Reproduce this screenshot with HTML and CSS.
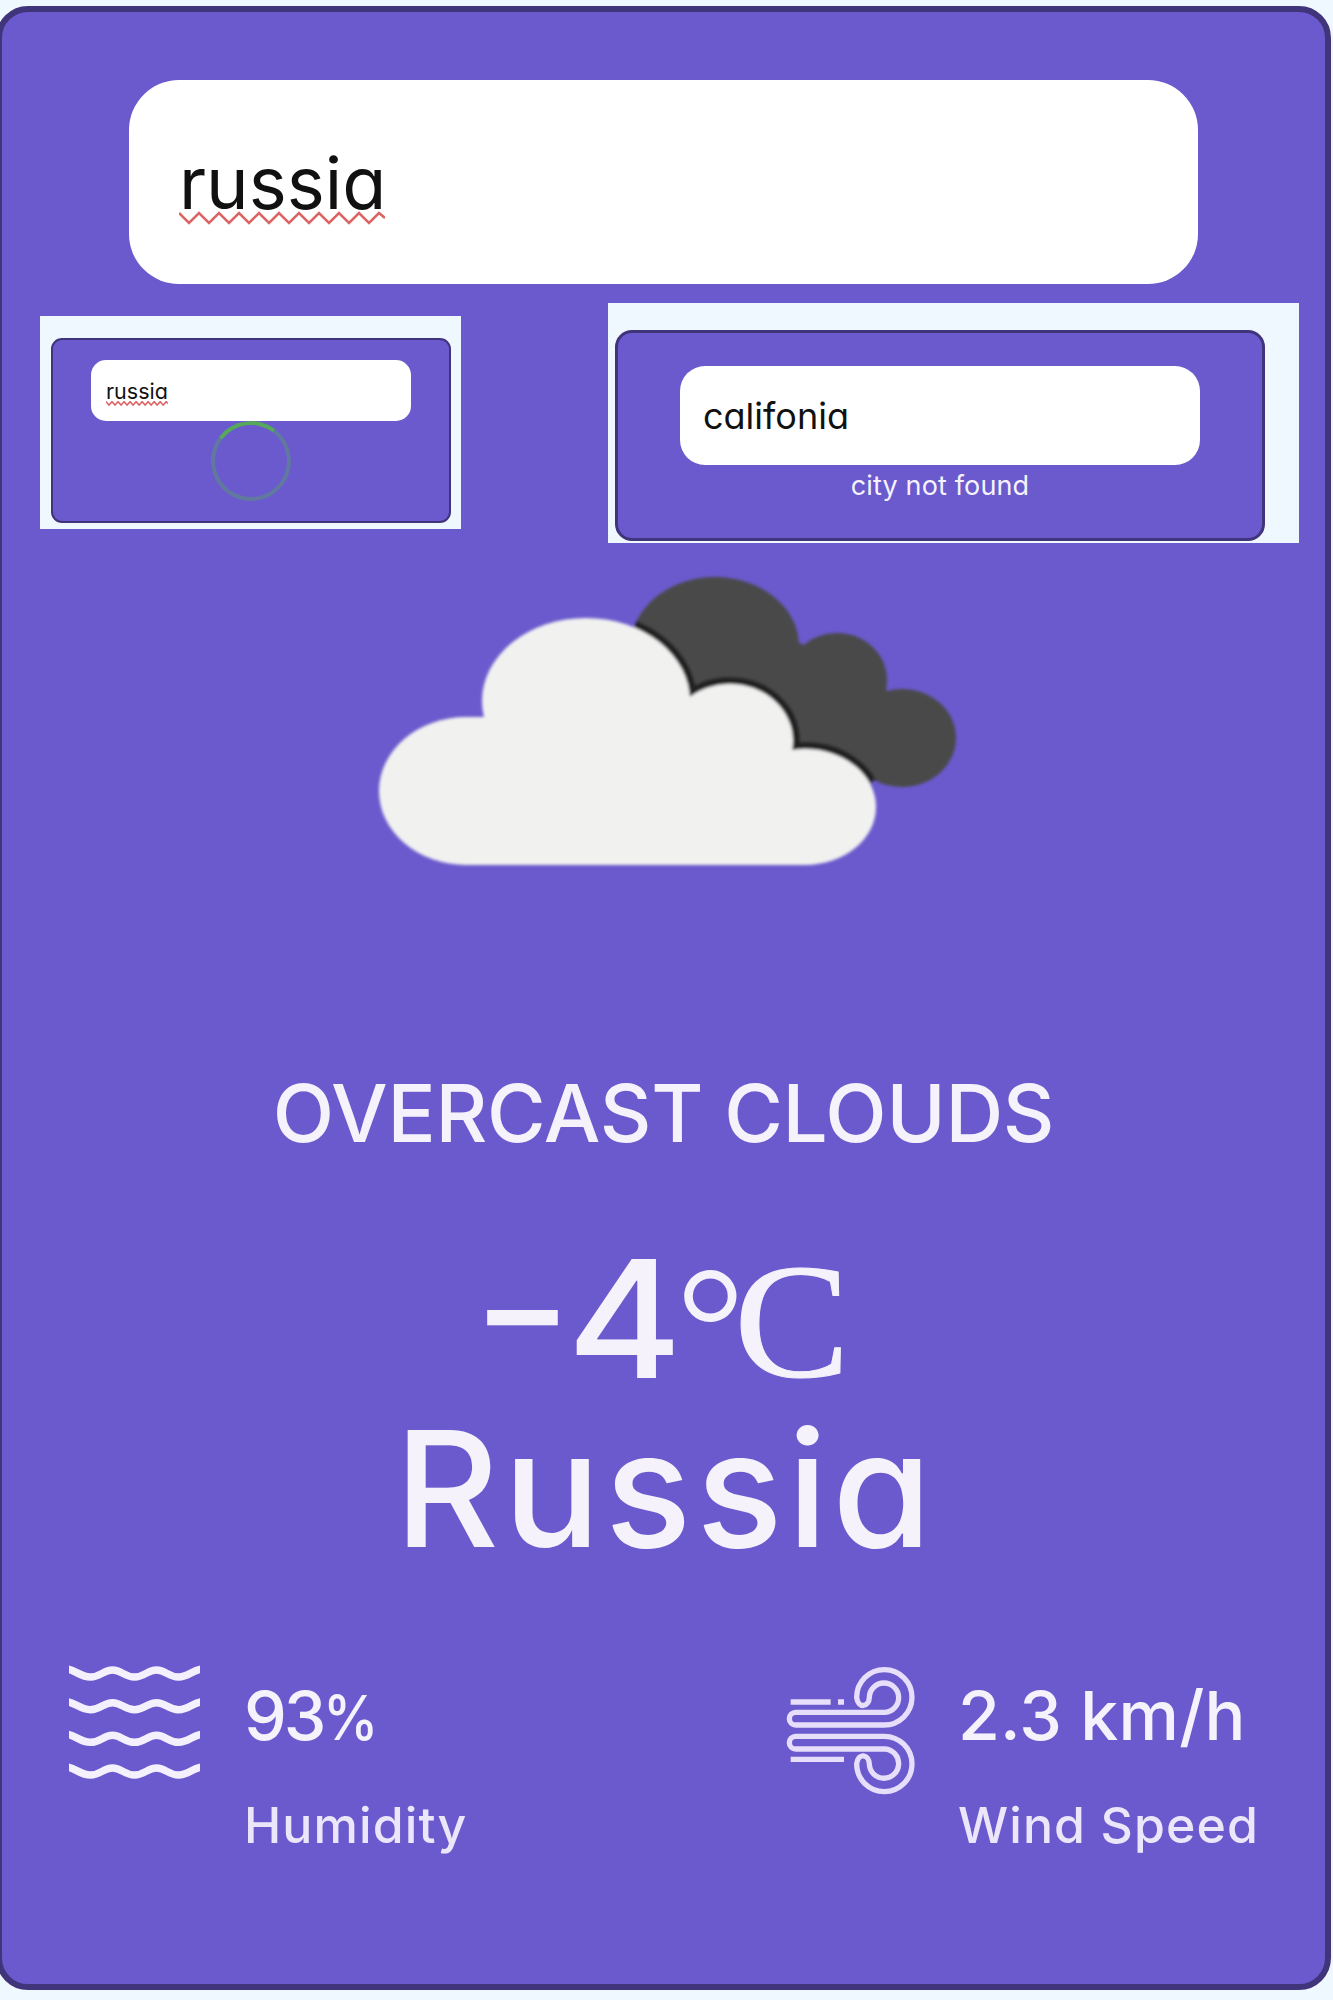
FILE: index.html
```html
<!DOCTYPE html>
<html lang="en">
<head>
<meta charset="utf-8">
<title>Weather</title>
<link rel="stylesheet" href="styles.css">
</head>
<body>
<main class="card">
  <div class="search"><span class="query">russia<svg class="squiggle" viewBox="0 0 206 16" preserveAspectRatio="none"><path d="M0 3L10 13L20 3L30 13L40 3L50 13L60 3L70 13L80 3L90 13L100 3L110 13L120 3L130 13L140 3L150 13L160 3L170 13L180 3L190 13L200 3L206 8"/></svg></span></div>

  <div class="states">
    <section class="state state-loading">
      <div class="mini mini-loading">
        <div class="search search-loading"><span class="query">russia<svg class="squiggle" viewBox="0 0 206 16" preserveAspectRatio="none"><path d="M0 2L10 13L20 2L30 13L40 2L50 13L60 2L70 13L80 2L90 13L100 2L110 13L120 2L130 13L140 2L150 13L160 2L170 13L180 2L190 13L200 2L206 8"/></svg></span></div>
        <div class="spinner"></div>
      </div>
    </section>
    <section class="state state-error">
      <div class="mini mini-error">
        <div class="search search-error"><span class="query">califonia</span></div>
        <p class="error"><span>city not found</span></p>
      </div>
    </section>
  </div>

  <svg class="cloud" viewBox="370 566 600 310">
    <defs>
      <clipPath id="back">
        <ellipse cx="715" cy="646" rx="84" ry="69"/>
        <ellipse cx="837" cy="680" rx="50" ry="47"/>
        <ellipse cx="902" cy="738" rx="54" ry="49"/>
        <path d="M640 640L800 643L887 690L872 784L790 760L690 700Z"/>
      </clipPath>
      <g id="front">
        <ellipse cx="466" cy="791" rx="87" ry="74"/>
        <ellipse cx="586" cy="701" rx="104" ry="83"/>
        <ellipse cx="730" cy="741" rx="63" ry="57"/>
        <ellipse cx="805" cy="807" rx="71" ry="58"/>
        <path d="M466 717H486L690 696L790 750L805 865H466Z"/>
      </g>
      <filter id="soft" x="-5%" y="-5%" width="110%" height="110%"><feGaussianBlur stdDeviation="1.8"/></filter>
    </defs>
    <g filter="url(#soft)">
      <g clip-path="url(#back)">
        <rect x="600" y="560" width="370" height="240" fill="#484849"/>
        <use href="#front" fill="#202023" stroke="#202023" stroke-width="14"/>
      </g>
      <use href="#front" fill="#f1f1f0"/>
    </g>
  </svg>

  <p class="condition"><span>OVERCAST CLOUDS</span></p>
  <p class="temp"><span class="dash">-</span><span class="number">4</span><span class="degree">°</span><span class="unit">C</span></p>
  <p class="city"><span>Russia</span></p>

  <div class="metrics">
    <div class="metric">
      <svg class="waves" viewBox="69 1663 131 118">
        <path id="wave" d="M67 1670C76 1671 80 1678 90.500 1678S103 1671 112.500 1671S124 1678 134.500 1678S147 1671 156.500 1671S168 1678 178.500 1678S192 1671 202 1670"/>
        <use href="#wave" y="32.700"/>
        <use href="#wave" y="65.300"/>
        <use href="#wave" y="98"/>
      </svg>
      <div class="reading">
        <p class="value humidity-value">93<span class="percent">%</span></p>
        <p class="label humidity-label">Humidity</p>
      </div>
    </div>
    <div class="metric">
      <svg class="wind" viewBox="75 70 396 400">
        <path id="gust" d="M290 170A83 83 0 1 1 372 253H107A19 19 0 0 1 107 215H375A44 44 0 1 0 328 170C327 200 294 205 290 170Z"/>
        <use href="#gust" transform="matrix(1 0 0 -1 0 540)"/>
        <path d="M92 184H212M234 184H252M92 356H252"/>
      </svg>
      <div class="reading reading-wind">
        <p class="value wind-value">2.3 km/h</p>
        <p class="label wind-label">Wind Speed</p>
      </div>
    </div>
  </div>
</main>
</body>
</html>
```
FILE: styles.css
```css
* { box-sizing: border-box; }
body {
  margin: 0;
  height: 2000px;
  overflow: hidden;
  background: #f0f8ff;
  color: #f5f2fc;
  font-family: "Inter", "Open Sans", sans-serif;
  font-feature-settings: "cv11" 1;
  display: flow-root;
}
p { margin: 0; white-space: nowrap; }
svg { display: block; flex: none; }

.card {
  width: 1335px;
  height: 1984px;
  margin: 6px 0 0 -4px;
  border: 6px solid #40347a;
  border-radius: 32px;
  background: #6a5acd;
}

.search {
  display: flex;
  align-items: center;
  width: 1069px;
  height: 204px;
  margin: 68px 0 0 127px;
  padding: 2px 0 0 50px;
  border-radius: 50px;
  background: #fff;
  color: #111;
  font-size: 72px;
  line-height: 1.2;
}
.query { position: relative; white-space: nowrap; }
.squiggle {
  position: absolute;
  left: 0;
  top: 70px;
  width: 206px;
  height: 16px;
  fill: none;
  stroke: #dc6464;
  stroke-width: 2.5;
}

.states {
  display: flex;
  align-items: flex-start;
  height: 240px;
  margin: 19px 0 0 38px;
}
.state { background: #f0f8ff; }
.state-loading { width: 421px; height: 213px; margin-top: 13px; padding: 22px 10px 0 11px; }
.state-error { width: 691px; height: 240px; margin-left: 147px; padding: 27px 34px 0 7px; }
.mini { background: #6a5acd; }
.mini-loading { height: 185px; border: 2px solid #40347a; border-radius: 11px; }
.mini-error { height: 211px; border: 3px solid #40347a; border-radius: 17px; }

.search-loading {
  width: 320px;
  height: 61px;
  margin: 20px 0 0 38px;
  padding: 3px 0 0 15px;
  border-radius: 15px;
  font-size: 21.5px;
}
.search-loading .squiggle { top: 21.500px; width: 62px; height: 5px; stroke-width: 5; }
.spinner {
  width: 80px;
  height: 80px;
  margin: 0 auto;
  border: 4px solid rgba(86, 168, 90, .4);
  border-top-color: #56a85a;
  border-radius: 50%;
  transform: rotate(-8deg);
}
.search-error {
  width: 520px;
  height: 99px;
  margin: 33px 0 0 62px;
  padding: 3px 0 0 23px;
  border-radius: 25px;
  font-size: 36px;
}
.error { padding-top: 1px; font-size: 27px; line-height: 40px; letter-spacing: .15px; text-align: center; }

.cloud { width: 600px; height: 310px; margin: 23px 0 0 368px; }

.condition, .temp, .city, .value, .label { font-weight: 450; }
.condition, .city { text-align: center; }
.condition { margin-top: 187px; font-size: 80px; line-height: 100px; letter-spacing: -.25px; }
.temp { display: flex; height: 162px; margin: 76px 0 0 474px; font-size: 164px; line-height: 160px; }
.dash { display: block; width: 91px; margin-top: -10px; transform: scaleX(1.33); transform-origin: 12px 0; }
.number { display: block; width: 109px; transform: scaleX(1.07); transform-origin: 0 0; }
.degree, .unit { display: block; font-family: "Liberation Serif", serif; font-weight: 400; }
.degree { width: 57px; padding-top: 7px; font-size: 172px; }
.unit { margin-left: 1px; padding-top: 2px; font-size: 164px; transform: scaleX(1.06); transform-origin: 0 0; -webkit-text-stroke: 1px #f5f2fc; }
.city { height: 160px; margin-top: 8px; font-size: 161px; line-height: 160px; letter-spacing: 4.500px; text-indent: 4px; }

.metrics { display: flex; margin-top: 94px; padding-left: 67px; }
.metric { display: flex; width: 716px; }
.metric:last-child { width: auto; }
.waves { width: 131px; height: 118px; margin-top: -1px; }
.waves path { fill: none; stroke: #f4f0fd; stroke-width: 7.500; }
.wind { width: 132px; height: 133.300px; margin-top: 1px; }
.wind path { fill: none; stroke: #e6defa; stroke-width: 16; }
.reading { padding-top: 12px; margin-left: 44px; }
.reading-wind { margin-left: 41px; }
.value { height: 80px; font-size: 68px; line-height: 80px; }
.humidity-value { letter-spacing: -3px; }
.percent { font-size: 62px; display: inline-block; line-height: 1; transform: scaleX(.9); transform-origin: 0 0; }
.wind-value { letter-spacing: .2px; }
.label { margin-top: 40px; font-size: 50px; line-height: 60px; letter-spacing: 1.100px; color: #ece6fa; }
```
